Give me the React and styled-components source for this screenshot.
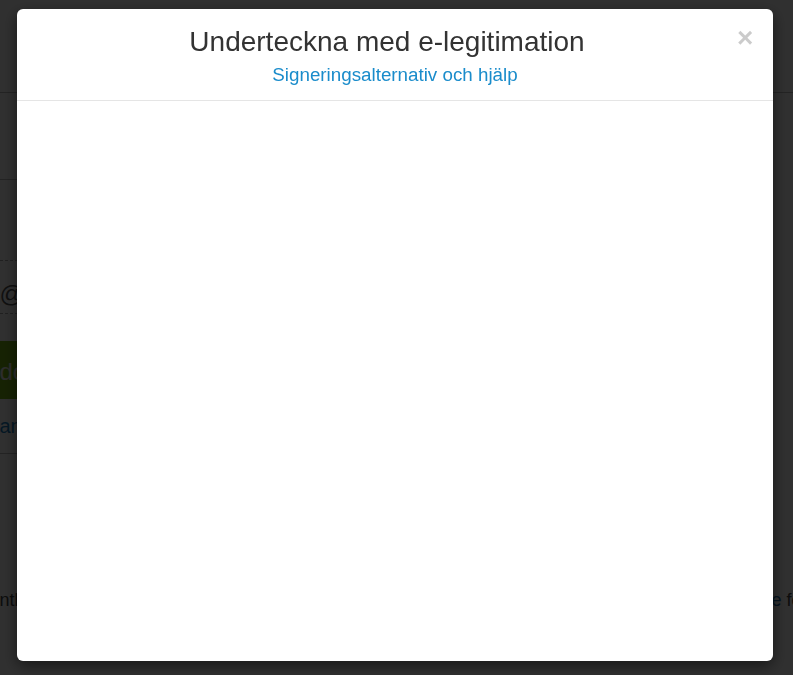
import styled, { createGlobalStyle } from 'styled-components';

const GlobalStyle = createGlobalStyle`
  html, body {
    margin: 0;
    height: 100%;
    overflow: hidden;
    background: #fff;
    font-family: 'Liberation Sans', Arial, sans-serif;
    color: #333;
  }
`;

const Page = styled.div`
  display: flex;
  flex-direction: column;
  height: 675px;
`;

const TopBar = styled.header`
  height: 92px;
  flex-shrink: 0;
  border-bottom: 1px solid #bbb;
`;

const Main = styled.main`
  display: flex;
  justify-content: center;
  flex: 1;
`;

const Container = styled.div`
  width: 960px;
  flex-shrink: 0;
  display: flex;
  flex-direction: column;
`;

const FormColumn = styled.div`
  width: 420px;
  padding-left: 83px;
`;

const Intro = styled.div`
  height: 86px;
  border-bottom: 1px solid #bbb;
`;

const FieldGap = styled.div`
  height: 80px;
`;

const Field = styled.div`
  height: 54px;
  box-sizing: border-box;
  padding-bottom: 5px;
  border-top: 1px dashed #aaa;
  border-bottom: 1px dashed #aaa;
  display: flex;
  align-items: flex-end;
  font-size: 24px;
  color: #555;
`;

const GreenButton = styled.button`
  margin-top: 27px;
  height: 58px;
  width: 100%;
  border: none;
  background: #76b414;
  color: #eee;
  font-family: inherit;
  font-size: 24px;
  text-align: left;
  padding: 3px 0 0;
`;

const LinkRow = styled.div`
  height: 54px;
  display: flex;
  align-items: center;
  border-bottom: 1px solid #bbb;
  font-size: 20px;
  color: #1a7ec0;
`;

const Footer = styled.div`
  margin-top: 136px;
  padding: 0 24px 0 83px;
  display: flex;
  justify-content: space-between;
  font-size: 18px;
  color: #444;
  white-space: nowrap;
`;

const FooterLink = styled.span`
  color: #1a6aa8;
`;

const Overlay = styled.div`
  position: fixed;
  inset: 0;
  background: rgba(0, 0, 0, 0.81);
  display: flex;
  justify-content: center;
  align-items: flex-start;
  padding: 9px 3px 0 0;
`;

const Modal = styled.div`
  width: 756px;
  height: 652px;
  background: #fff;
  border-radius: 6px;
  box-shadow: 0 5px 15px rgba(0, 0, 0, 0.5);
  display: flex;
  flex-direction: column;
  overflow: hidden;
`;

const ModalHeader = styled.div`
  padding: 17px 15px 13px;
  border-bottom: 1px solid #e5e5e5;
  text-align: center;
`;

const TitleRow = styled.div`
  display: flex;
  align-items: flex-start;
`;

const Title = styled.h4`
  flex: 1;
  margin: 0 0 6px;
  padding-left: 5px;
  font-size: 28px;
  line-height: 31px;
  font-weight: normal;
  color: #333;
`;

const CloseButton = styled.button`
  width: 16px;
  padding: 0;
  margin: -2px 5px 0 0;
  border: none;
  background: transparent;
  font-family: 'Liberation Sans', Arial, sans-serif;
  font-size: 28px;
  font-weight: bold;
  line-height: 1;
  color: #000;
  opacity: 0.2;
  cursor: pointer;
`;

const HelpLink = styled.a`
  display: inline-block;
  font-size: 18.8px;
  line-height: 24px;
  color: #1a8ccb;
  text-decoration: none;
`;

const ModalBody = styled.div`
  flex: 1;
`;

const App = () => {
  return (
    <>
      <GlobalStyle />
      <Page>
        <TopBar />
        <Main>
          <Container>
            <FormColumn>
              <Intro />
              <FieldGap />
              <Field>@adress.se</Field>
              <GreenButton>dokumentet</GreenButton>
              <LinkRow>ange annan e-post</LinkRow>
            </FormColumn>
            <Footer>
              <span>ntligen klar</span>
              <span>
                <FooterLink>e</FooterLink> formulär
              </span>
            </Footer>
          </Container>
        </Main>
      </Page>
      <Overlay>
        <Modal role="dialog" aria-labelledby="sign-title">
          <ModalHeader>
            <TitleRow>
              <Title id="sign-title">Underteckna med e-legitimation</Title>
              <CloseButton aria-label="Stäng">×</CloseButton>
            </TitleRow>
            <HelpLink href="#">Signeringsalternativ och hjälp</HelpLink>
          </ModalHeader>
          <ModalBody />
        </Modal>
      </Overlay>
    </>
  );
};

export default App;
